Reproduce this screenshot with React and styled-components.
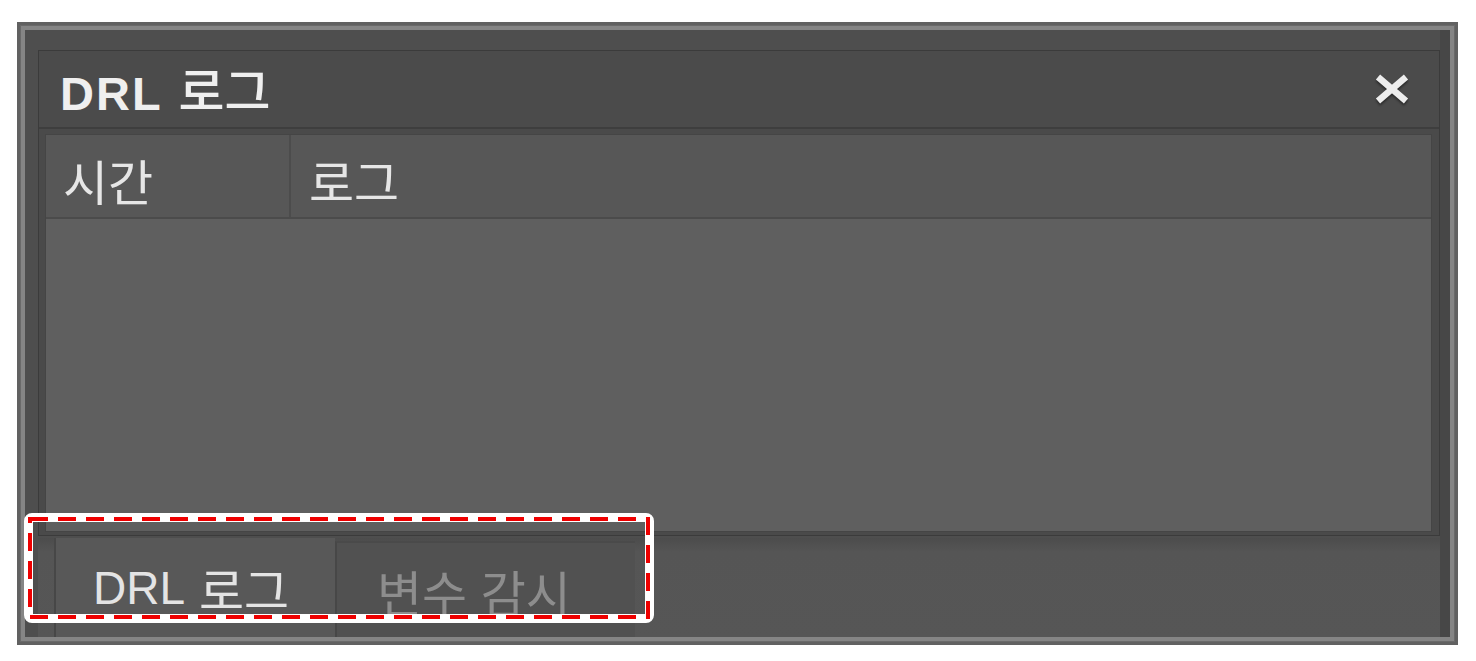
import React from 'react';
import styled, { createGlobalStyle } from 'styled-components';

const GlobalStyle = createGlobalStyle`
    body {
        margin: 0;
        background: #ffffff;
        font-family: "Liberation Sans", "Noto Sans CJK KR", sans-serif;
    }
`;

const Page = styled.div`
    position: relative;
    width: 1476px;
    height: 661px;
    padding: 22px 0 0 17px;
    box-sizing: border-box;
`;

const Frame = styled.div`
    width: 1441px;
    height: 623px;
    box-sizing: border-box;
    border: 3px solid #616161;
    background: #4e4e4e;
    box-shadow: inset 0 0 0 1px #6a6a6a, inset 0 0 0 5px #858585, inset -15px 0 0 0 #474747;
    padding: 25px 15px 5px 18px;
    display: flex;
    flex-direction: column;
`;

const Window = styled.div`
    height: 486px;
    box-sizing: border-box;
    border: 1px solid #3b3b3b;
    background: #4a4a4a;
    padding: 0 7px 3px 6px;
    display: flex;
    flex-direction: column;
`;

const TitleBar = styled.div`
    height: 76px;
    margin: 0 -7px 0 -6px;
    padding: 0 28px 0 21px;
    display: flex;
    align-items: center;
    justify-content: space-between;
    border-bottom: 2px solid #3e3e3e;
    background: #4b4b4b;
`;

const Title = styled.div`
    font-size: 50px;
    font-weight: 500;
    color: #efefef;
    margin-top: -3px;
    b {
        font-size: 47px;
        font-weight: 700;
        letter-spacing: 2px;
        margin-right: 16px;
    }
`;

const CloseButton = styled.div`
    width: 38px;
    height: 32px;
    filter: drop-shadow(0 2px 1px rgba(0, 0, 0, 0.45));
`;

const Table = styled.div`
    margin-top: 5px;
    flex: 1;
    border: 1px solid #454545;
    background: #5f5f5f;
    display: flex;
    flex-direction: column;
`;

const HeaderRow = styled.div`
    height: 82px;
    display: flex;
    background: #575757;
    border-bottom: 2px solid #4b4b4b;
`;

const HeaderCell = styled.div`
    width: ${p => p.$width || 'auto'};
    flex: ${p => (p.$width ? 'none' : 1)};
    box-sizing: border-box;
    padding: 6px 0 0 ${p => p.$pad}px;
    display: flex;
    align-items: center;
    font-size: 49px;
    color: #e6e6e6;
    border-right: ${p => (p.$width ? '2px solid #4c4c4c' : 'none')};
`;

const TableBody = styled.div`
    flex: 1;
`;

const TabRow = styled.div`
    flex: 1;
    margin-top: 2px;
    padding-left: 16px;
    display: flex;
    align-items: stretch;
    background: linear-gradient(#4c4c4c, #555555 14px, #565656);
`;

const Tab = styled.div`
    width: ${p => p.$width}px;
    box-sizing: border-box;
    margin-top: ${p => (p.$active ? 0 : 3)}px;
    padding: 0 0 0 ${p => p.$pad}px;
    display: flex;
    align-items: center;
    font-size: 49px;
    color: ${p => (p.$active ? '#e4e4e4' : '#8d8d8d')};
    background: ${p => (p.$active ? '#585858' : '#515151')};
    border-left: 2px solid #474747;
    border-top: ${p => (p.$active ? 'none' : '2px solid #4a4a4a')};
    b {
        font-size: 46px;
        font-weight: 400;
        margin-right: 14px;
    }
`;

const Marker = styled.svg`
    position: absolute;
    left: 24px;
    top: 513px;
    pointer-events: none;
`;

export default function App() {
    return (
        <Page>
            <GlobalStyle />
            <Frame>
                <Window>
                    <TitleBar>
                        <Title><b>DRL</b>로그</Title>
                        <CloseButton>
                            <svg width="38" height="32" viewBox="0 0 38 32">
                                <path d="M5 4 L33 28 M33 4 L5 28" stroke="#ededed" strokeWidth="6.5" />
                            </svg>
                        </CloseButton>
                    </TitleBar>
                    <Table>
                        <HeaderRow>
                            <HeaderCell $width="245px" $pad={17}>시간</HeaderCell>
                            <HeaderCell $pad={18}>로그</HeaderCell>
                        </HeaderRow>
                        <TableBody />
                    </Table>
                </Window>
                <TabRow>
                    <Tab $active $width={281} $pad={37}><b>DRL</b>로그</Tab>
                    <Tab $width={300} $pad={40}>변수 감시</Tab>
                </TabRow>
            </Frame>
            <Marker width="630" height="110" viewBox="0 0 630 110">
                <rect x="2" y="2" width="626" height="106" rx="6" fill="none" stroke="#ffffff" strokeWidth="4" />
                <rect x="6" y="6" width="618" height="98" fill="none" stroke="#ffffff" strokeWidth="6" />
                <rect x="6" y="6" width="618" height="98" fill="none" stroke="#ee0000" strokeWidth="4" strokeDasharray="18 10" />
            </Marker>
        </Page>
    );
}
